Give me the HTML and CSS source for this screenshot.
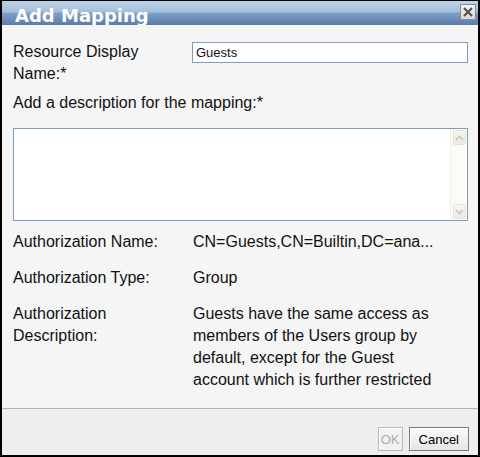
FILE: index.html
```html
<!DOCTYPE html>
<html>
<head>
<meta charset="utf-8">
<link rel="stylesheet" href="styles.css">
</head>
<body>
<div class="dialog">
  <div class="titlebar">
    <span class="title">Add Mapping</span>
    <span class="close">
      <svg width="14" height="14" viewBox="0 0 14 14"><path d="M3 3 L11 11 M11 3 L3 11" stroke="#555" stroke-width="2.2" fill="none"/></svg>
    </span>
  </div>
  <div class="content">
    <div class="name-row">
      <label class="label">Resource Display Name:*</label>
      <div class="input">Guests</div>
    </div>
    <div class="desc-label">Add a description for the mapping:*</div>
    <div class="textarea">
      <div class="text-area-inner"></div>
      <div class="scrollbar">
        <span class="sbtn"><svg width="9" height="6" viewBox="0 0 9 6"><path d="M1 5 L4.5 1.5 L8 5" stroke="#c6c5bd" stroke-width="1.6" fill="none"/></svg></span>
        <span class="sbtn"><svg width="9" height="6" viewBox="0 0 9 6"><path d="M1 1 L4.5 4.5 L8 1" stroke="#c6c5bd" stroke-width="1.6" fill="none"/></svg></span>
      </div>
    </div>
    <div class="info">
      <div class="label">Authorization Name:</div>
      <div class="value">CN=Guests,CN=Builtin,DC=ana...</div>
      <div class="label">Authorization Type:</div>
      <div class="value">Group</div>
      <div class="label">Authorization<br>Description:</div>
      <div class="value">Guests have the same access as<br>members of the Users group by<br>default, except for the Guest<br>account which is further restricted</div>
    </div>
  </div>
  <div class="footer">
    <button class="btn disabled">OK</button>
    <button class="btn">Cancel</button>
  </div>
</div>
</body>
</html>
```

FILE: styles.css
```css
html, body {
  margin: 0;
  padding: 0;
  background: #000;
}

.dialog {
  width: 480px;
  height: 457px;
  box-sizing: border-box;
  border-top: 1px solid #000;
  border-left: 2px solid #000;
  border-right: 2px solid #000;
  border-bottom: 2px solid #000;
  display: flex;
  flex-direction: column;
  background: #f5f5f5;
  font-family: "Liberation Sans", Arial, sans-serif;
  color: #111;
}

.titlebar {
  height: 24px;
  flex: none;
  box-sizing: border-box;
  padding: 4px 2px 0 13px;
  overflow: hidden;
  display: flex;
  justify-content: space-between;
  align-items: flex-start;
  background: linear-gradient(#bcd3e7 0, #a5bfda 11px, #809fc7 12px, #5a7caa 100%);
}

.title {
  font-family: "DejaVu Sans", Verdana, sans-serif;
  font-weight: bold;
  font-size: 18px;
  line-height: 21px;
  color: #fff;
}

.close {
  width: 16px;
  height: 16px;
  box-sizing: border-box;
  margin-top: -1px;
  border: 1px solid #8a8a8a;
  background: linear-gradient(#f4f4f4, #d8d8d8);
  display: flex;
  align-items: center;
  justify-content: center;
}

.close svg {
  display: block;
}

.content {
  flex: 1;
  padding: 16px 10px 0 11px;
  font-size: 16px;
  line-height: 22px;
}

.name-row {
  display: grid;
  grid-template-columns: 179px 1fr;
}

.name-row .label {
  width: 150px;
}

.input {
  margin-top: 1px;
  height: 21px;
  box-sizing: border-box;
  border: 1px solid #7f9db9;
  background: #fff;
  padding: 0 3px;
  font-size: 13px;
  line-height: 19px;
}

.desc-label {
  margin-top: 7px;
}

.textarea {
  margin-top: 14px;
  height: 93px;
  box-sizing: border-box;
  border: 1px solid #7f9db9;
  background: #fff;
  display: flex;
}

.text-area-inner {
  flex: 1;
}

.scrollbar {
  width: 17px;
  box-sizing: border-box;
  padding: 1px 1px 1px 2px;
  background: #fbfbf7;
  border-left: 1px solid #efeee7;
  display: flex;
  flex-direction: column;
  justify-content: space-between;
}

.sbtn {
  height: 15px;
  box-sizing: border-box;
  border: 1px solid #e4e3dc;
  border-radius: 2px;
  background: linear-gradient(#f6f5f0, #eae9e2);
  display: flex;
  align-items: center;
  justify-content: center;
}

.sbtn svg {
  display: block;
}

.info {
  margin-top: 10px;
  display: grid;
  grid-template-columns: 180px 1fr;
  row-gap: 14px;
}

.footer {
  flex: none;
  height: 47px;
  box-sizing: border-box;
  border-top: 1px solid #b4b4b4;
  background: #efeeec;
  display: flex;
  justify-content: flex-end;
  align-items: flex-end;
  gap: 6px;
  padding: 0 9px 4px 0;
}

.btn {
  height: 24px;
  box-sizing: border-box;
  margin: 0;
  padding: 0 9px;
  font-family: "Liberation Sans", Arial, sans-serif;
  font-size: 13px;
  color: #000;
  border: 1px solid #7c7c7c;
  border-radius: 0;
  background: linear-gradient(#fafafa, #e6e6e6);
  box-shadow: inset 1px 1px 0 #fff;
}

.btn.disabled {
  padding: 0 2px;
  color: #acacac;
  border-color: #b8b8b8;
  background: #f2f2f0;
}
```
